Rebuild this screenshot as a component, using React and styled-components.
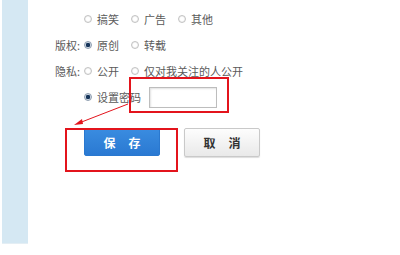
import React from 'react';
import styled, { createGlobalStyle } from 'styled-components';

const GlobalStyle = createGlobalStyle`
  html, body {
    margin: 0;
    padding: 0;
    background: #fff;
  }
  body {
    font-family: "Noto Sans CJK SC", "Noto Sans", sans-serif;
  }
`;

const Page = styled.div`
  position: relative;
  display: flex;
  width: 400px;
  height: 255px;
  overflow: hidden;
`;

const Sidebar = styled.div`
  width: 26px;
  height: 243px;
  margin-left: 2px;
  background: #d5e8f3;
  box-shadow: 0 1px 0 #e4eef4;
`;

const Main = styled.div`
  padding: 6px 0 0 27px;
  font-size: 11px;
  color: #5a5a5a;
`;

const Row = styled.div`
  display: flex;
  align-items: center;
  height: 26px;
`;

const Label = styled.span`
  width: 29px;
  flex: none;
  white-space: nowrap;
`;

const Option = styled.label`
  display: flex;
  align-items: center;
  width: ${(p) => (p.$wide ? 'auto' : '47px')};
  white-space: nowrap;
`;

const Radio = styled.span`
  width: 8px;
  height: 8px;
  margin-right: 5px;
  border-radius: 50%;
  border: 1px solid ${(p) => (p.$checked ? '#8d9cae' : '#c2c2c2')};
  background: ${(p) =>
    p.$checked
      ? 'radial-gradient(circle, #17355a 0 45%, #cfd9e4 60%)'
      : 'radial-gradient(circle, #fff 0 35%, #e3e3e3 100%)'};
  box-sizing: border-box;
  flex: none;
`;

const PasswordInput = styled.input`
  width: 68px;
  height: 21px;
  margin-left: 8px;
  border: 1px solid #bdbdbd;
  box-shadow: inset 1px 1px 2px #e2e2e2;
  box-sizing: border-box;
  outline: none;
`;

const Buttons = styled.div`
  display: flex;
  gap: 24px;
  margin: 18px 0 0 29px;
`;

const Button = styled.button`
  width: 76px;
  height: ${(p) => (p.$primary ? '28px' : '29px')};
  padding: 0 0 0 13px;
  border-radius: 2px;
  font-family: "Noto Sans CJK SC", sans-serif;
  font-size: 12px;
  font-weight: 700;
  letter-spacing: 13px;
  color: ${(p) => (p.$primary ? '#fff' : '#333')};
  border: 1px solid ${(p) => (p.$primary ? '#2a78cf' : '#c9c9c9')};
  background: ${(p) =>
    p.$primary
      ? 'linear-gradient(#3a8ce0, #2a79d2)'
      : 'linear-gradient(#fdfdfd, #e9e9e9)'};
  box-shadow: ${(p) => (p.$primary ? 'none' : '0 1px 1px #ddd')};
`;

const Mark = styled.div`
  position: absolute;
  border: 2px solid #e3141c;
  box-sizing: border-box;
`;

const Arrow = styled.svg`
  position: absolute;
  left: 70px;
  top: 100px;
`;

export default function App() {
  return (
    <Page>
      <GlobalStyle />
      <Sidebar />
      <Main>
        <Row>
          <Label />
          <Option><Radio />搞笑</Option>
          <Option><Radio />广告</Option>
          <Option><Radio />其他</Option>
        </Row>
        <Row>
          <Label>版权:</Label>
          <Option><Radio $checked />原创</Option>
          <Option><Radio />转载</Option>
        </Row>
        <Row>
          <Label>隐私:</Label>
          <Option><Radio />公开</Option>
          <Option $wide><Radio />仅对我关注的人公开</Option>
        </Row>
        <Row>
          <Label />
          <Option $wide><Radio $checked />设置密码</Option>
          <PasswordInput type="password" />
        </Row>
        <Buttons>
          <Button $primary>保存</Button>
          <Button>取消</Button>
        </Buttons>
      </Main>

      <Mark style={{ left: 129, top: 77, width: 100, height: 36 }} />
      <Mark style={{ left: 65, top: 128, width: 113, height: 44 }} />
      <Arrow width="64" height="30" viewBox="0 0 64 30">
        <line x1="58" y1="4" x2="9" y2="23" stroke="#e3141c" strokeWidth="1" />
        <polygon points="4,25 12,19 13,24" fill="#e3141c" />
      </Arrow>
    </Page>
  );
}
